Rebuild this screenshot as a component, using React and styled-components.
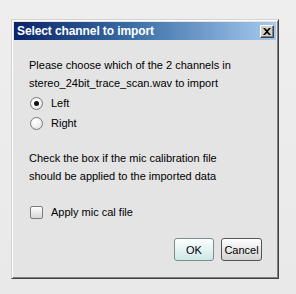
import React from "react";
import styled, { createGlobalStyle } from "styled-components";

const Global = createGlobalStyle`
  html, body { margin: 0; padding: 0; background: #ececec; }
  body { font-family: "Liberation Sans", Arial, sans-serif; }
`;

const Page = styled.div`
  width: 296px;
  height: 294px;
  box-sizing: border-box;
  padding: 19px 0 0 11px;
  background: linear-gradient(to bottom, #eeeeee, #e9e9e9);
`;

const Dialog = styled.div`
  width: 268px;
  height: 260px;
  box-sizing: border-box;
  background: #e4e4e4;
  border-top: 1px solid #d6d3ce;
  border-left: 1px solid #d6d3ce;
  border-right: 1px solid #404040;
  border-bottom: 1px solid #404040;
  box-shadow: inset 1px 1px 0 #ffffff, inset -1px -1px 0 #808080;
  padding: 2px;
  display: flex;
  flex-direction: column;
`;

const TitleBar = styled.div`
  height: 18px;
  display: flex;
  align-items: center;
  justify-content: space-between;
  padding: 0 2px 0 3px;
  background: linear-gradient(to right, #0a246a 0%, #3a6ea5 45%, #a6caf0 100%);
`;

const Title = styled.span`
  color: #ffffff;
  font-weight: bold;
  font-size: 12px;
  font-family: "Liberation Sans", Arial, sans-serif;
  letter-spacing: -0.1px;
`;

const CloseButton = styled.div`
  width: 14px;
  height: 13px;
  box-sizing: border-box;
  background: #d4d0c8;
  border-top: 1px solid #ffffff;
  border-left: 1px solid #ffffff;
  border-right: 1px solid #404040;
  border-bottom: 1px solid #404040;
  box-shadow: inset -1px -1px 0 #808080;
  display: flex;
  align-items: center;
  justify-content: center;
`;

const Body = styled.div`
  flex: 1;
  display: flex;
  flex-direction: column;
  padding: 16px 14px 0 15px;
  font-size: 11px;
  color: #000;
`;

const Paragraph = styled.div`
  line-height: 18px;
  margin-top: ${(p) => p.$mt || 0}px;
  white-space: nowrap;
`;

const Group = styled.div`
  display: flex;
  flex-direction: column;
  margin-top: ${(p) => p.$mt || 0}px;
`;

const OptionRow = styled.label`
  height: 20px;
  display: flex;
  align-items: center;
  gap: 8px;
  padding-left: 1px;
`;

const RadioCircle = styled.span`
  width: 13px;
  height: 13px;
  box-sizing: border-box;
  border-radius: 50%;
  border: 1px solid #7a7a7a;
  background: radial-gradient(circle at 40% 35%, #ffffff 0%, #f4f4f4 45%, #d2d2d2 100%);
  display: flex;
  align-items: center;
  justify-content: center;
  &::after {
    content: "";
    width: 5px;
    height: 5px;
    border-radius: 50%;
    background: ${(p) => (p.$checked ? "#111" : "transparent")};
  }
`;

const CheckSquare = styled.span`
  width: 13px;
  height: 13px;
  box-sizing: border-box;
  border-radius: 2px;
  border: 1px solid #7c7c7c;
  background: linear-gradient(to bottom, #fdfdfd, #d6d6d6);
`;

const Buttons = styled.div`
  display: flex;
  justify-content: flex-end;
  gap: 7px;
  margin-top: 16px;
`;

const Button = styled.div`
  width: ${(p) => p.$w}px;
  height: 23px;
  box-sizing: border-box;
  border-radius: 3px;
  border: 1px solid ${(p) => (p.$primary ? "#7c8d8d" : "#555555")};
  background: ${(p) =>
    p.$primary
      ? "linear-gradient(to bottom, #fbffff, #cfe7e7)"
      : "linear-gradient(to bottom, #ffffff, #d2d2d2)"};
  display: flex;
  align-items: center;
  justify-content: center;
  font-size: 11px;
  color: #000;
`;

export default function App() {
  return (
    <>
      <Global />
      <Page>
        <Dialog>
          <TitleBar>
            <Title>Select channel to import</Title>
            <CloseButton>
              <svg width="8" height="7" viewBox="0 0 8 7">
                <path d="M0 0h2l2 2 2-2h2L5 3.5 8 7H6L4 5 2 7H0l3-3.5z" fill="#000" />
              </svg>
            </CloseButton>
          </TitleBar>
          <Body>
            <Paragraph>
              Please choose which of the 2 channels in
              <br />
              stereo_24bit_trace_scan.wav to import
            </Paragraph>
            <Group $mt={1}>
              <OptionRow>
                <RadioCircle $checked />
                Left
              </OptionRow>
              <OptionRow>
                <RadioCircle />
                Right
              </OptionRow>
            </Group>
            <Paragraph $mt={16}>
              Check the box if the mic calibration file
              <br />
              should be applied to the imported data
            </Paragraph>
            <Group $mt={17}>
              <OptionRow>
                <CheckSquare />
                Apply mic cal file
              </OptionRow>
            </Group>
            <Buttons>
              <Button $primary $w={40}>OK</Button>
              <Button $w={41}>Cancel</Button>
            </Buttons>
          </Body>
        </Dialog>
      </Page>
    </>
  );
}
